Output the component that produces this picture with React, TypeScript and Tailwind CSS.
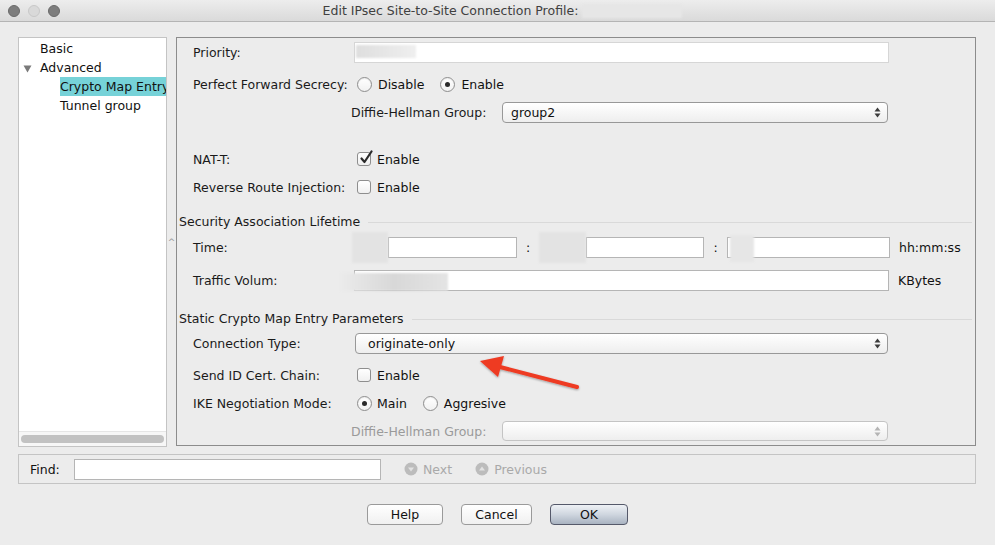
import React from "react";

const font = { fontFamily: '"DejaVu Sans", "Lucida Grande", sans-serif' };

function Radio({ checked }: { checked?: boolean }) {
  return (
    <span className="inline-flex h-[15px] w-[15px] shrink-0 items-center justify-center rounded-full border border-[#8e8e8e] bg-gradient-to-b from-[#ffffff] to-[#f1f1f1] shadow-[inset_0_1px_1px_rgba(0,0,0,0.08)]">
      {checked && <span className="h-[5px] w-[5px] rounded-full bg-[#2a2a2a]" />}
    </span>
  );
}

function Check({ checked }: { checked?: boolean }) {
  return (
    <span className="relative inline-flex h-[14px] w-[14px] shrink-0 items-center justify-center rounded-[3px] border border-[#8e8e8e] bg-gradient-to-b from-[#ffffff] to-[#f0f0f0]">
      {checked && (
        <svg width="14" height="15" viewBox="0 0 14 15" className="absolute left-[1px] top-[-3px]">
          <path d="M2.5 8.5 L5.5 12 L12.5 1.5" fill="none" stroke="#2b2b2b" strokeWidth="2.2" strokeLinecap="round" strokeLinejoin="round" />
        </svg>
      )}
    </span>
  );
}

function Arrows({ light }: { light?: boolean }) {
  const c = light ? "#b4b4b4" : "#3c3c3c";
  return (
    <svg width="7" height="11" viewBox="0 0 7 11">
      <path d="M3.5 0.5 L6.5 4.5 L0.5 4.5 Z" fill={c} />
      <path d="M3.5 10.5 L6.5 6.5 L0.5 6.5 Z" fill={c} />
    </svg>
  );
}

function Txt({ children, className = "" }: { children: React.ReactNode; className?: string }) {
  return <span className={`pt-[2px] text-[12.5px] text-[#111] ${className}`}>{children}</span>;
}

function Select({ value, w, disabled }: { value?: string; w: string; disabled?: boolean }) {
  return (
    <div
      className={`flex h-full items-center justify-between rounded-[4px] border bg-gradient-to-b from-[#ffffff] to-[#eeeeee] pl-[8px] pr-[6px] ${w} ${
        disabled ? "border-[#c4c4c4]" : "border-[#989898]"
      }`}
    >
      <Txt>{value}</Txt>
      <Arrows light={disabled} />
    </div>
  );
}

function SectionTitle({ text, mt }: { text: string; mt: string }) {
  return (
    <div className={`flex h-[16px] items-center pl-[2px] pr-[3px] ${mt}`}>
      <span className="pt-[2px] text-[12.5px] leading-none text-[#1a1a1a]">{text}</span>
      <div className="ml-[8px] mt-[2px] h-px flex-1 bg-[#d9d9d9]" />
    </div>
  );
}

function Label({ text, w = "w-[161px]", gray }: { text: string; w?: string; gray?: boolean }) {
  return <span className={`shrink-0 pt-[2px] text-[12.5px] ${gray ? "text-[#9a9a9a]" : "text-[#1a1a1a]"} ${w}`}>{text}</span>;
}

function Button({ text, def, w }: { text: string; def?: boolean; w: string }) {
  return (
    <div
      className={`flex h-[21px] items-center justify-center rounded-[4px] border pt-[1px] text-[12.5px] text-[#111] ${w} ${
        def
          ? "border-[#55596a] bg-gradient-to-b from-[#eef1f5] via-[#cfd6df] to-[#a9b3c1]"
          : "border-[#9a9a9a] bg-gradient-to-b from-[#ffffff] to-[#f0f0f0]"
      }`}
    >
      {text}
    </div>
  );
}

export default function App() {
  return (
    <div className="relative flex h-[545px] w-[995px] flex-col overflow-hidden bg-[#ececec]" style={font}>
      {/* title bar */}
      <div className="relative flex h-[22px] shrink-0 items-center border-b border-[#b4b4b4] bg-gradient-to-b from-[#ededed] to-[#dadada]">
        <div className="flex items-center gap-[8px] pl-[8px]">
          <span className="h-[12px] w-[12px] rounded-full border border-[#6a6a6a] bg-[#7d7d7d]" />
          <span className="h-[12px] w-[12px] rounded-full border border-[#c8c8c8] bg-[#d9d9d9]" />
          <span className="h-[12px] w-[12px] rounded-full border border-[#6a6a6a] bg-[#7d7d7d]" />
        </div>
        <div className="flex flex-1 items-center justify-center pr-[50px]">
          <span className="pt-[1px] text-[12.5px] text-[#404040]">Edit IPsec Site-to-Site Connection Profile:</span>
          <span className="ml-[4px] h-[14px] w-[100px] bg-[#e6e6e6] blur-[1px]" />
        </div>
      </div>

      {/* main */}
      <div className="flex shrink-0 pl-[18px] pt-[15px]">
        {/* tree */}
        <div className="flex h-[410px] w-[149px] shrink-0 flex-col border border-[#c4c4c4] bg-white">
          <div className="flex flex-1 flex-col pt-[1px] text-[12.5px] text-[#111]">
            <div className="flex h-[19px] items-center pl-[21px] pt-[2px]">Basic</div>
            <div className="flex h-[19px] items-center pl-[4px] pt-[2px]">
              <svg width="9" height="8" viewBox="0 0 9 8" className="mr-[8px]">
                <path d="M0.5 0.5 L8.5 0.5 L4.5 7.5 Z" fill="#7a7a7a" />
              </svg>
              Advanced
            </div>
            <div className="flex h-[19px] items-center pl-[41px]">
              <span className="flex h-[19px] min-w-0 flex-1 items-center overflow-hidden whitespace-nowrap bg-[#76d2d8] pt-[2px]">Crypto Map Entry</span>
            </div>
            <div className="flex h-[19px] items-center pl-[41px] pt-[2px]">Tunnel group</div>
          </div>
          <div className="flex h-[15px] items-center border-t border-[#e6e6e6] bg-[#f7f7f7] px-[2px]">
            <div className="h-[8px] flex-1 rounded-full bg-[#c2c2c2]" />
          </div>
        </div>

        {/* splitter */}
        <div className="flex w-[9px] shrink-0 items-center justify-center">
          <span className="text-[9px] leading-none text-[#999]">^</span>
        </div>

        {/* right panel */}
        <div className="flex h-[409px] w-[800px] shrink-0 flex-col border border-[#8c8c8c] bg-[#ececec]">
          {/* Priority */}
          <div className="mt-[4px] flex h-[21px] items-center pl-[16px]">
            <Label text="Priority:" />
            <div className="relative h-full w-[535px] border border-[#d6d6d6] bg-white">
              <div className="absolute left-[1px] top-[2px] h-[13px] w-[60px] bg-gradient-to-r from-[#dedede] to-[#efefef] blur-[1px]" />
            </div>
          </div>
          {/* PFS */}
          <div className="mt-[10px] flex h-[22px] items-center pl-[16px]">
            <Label text="Perfect Forward Secrecy:" />
            <div className="flex items-center pl-[3px]">
              <Radio />
              <Txt className="ml-[6px]">Disable</Txt>
              <span className="ml-[16px] flex"><Radio checked /></span>
              <Txt className="ml-[6px]">Enable</Txt>
            </div>
          </div>
          {/* DH */}
          <div className="mt-[7px] flex h-[21px] items-center pl-[174px]">
            <Label text="Diffie-Hellman Group:" w="w-[151px]" />
            <Select value="group2" w="w-[386px]" />
          </div>
          {/* NAT-T */}
          <div className="mt-[25px] flex h-[22px] items-center pl-[16px]">
            <Label text="NAT-T:" w="w-[164px]" />
            <Check checked />
            <Txt className="ml-[6px]">Enable</Txt>
          </div>
          {/* RRI */}
          <div className="mt-[6px] flex h-[22px] items-center pl-[16px]">
            <Label text="Reverse Route Injection:" w="w-[164px]" />
            <Check />
            <Txt className="ml-[6px]">Enable</Txt>
          </div>

          <SectionTitle text="Security Association Lifetime" mt="mt-[15px]" />

          {/* Time */}
          <div className="mt-[8px] flex h-[21px] items-center pl-[16px]">
            <Label text="Time:" w="w-[159px]" />
            <div className="h-[31px] w-[36px] shrink-0 bg-[#e3e3e3] blur-[1px]" />
            <div className="h-full w-[129px] shrink-0 border border-[#b5b5b5] bg-white" />
            <Txt className="w-[22px] text-center">:</Txt>
            <div className="h-[31px] w-[47px] shrink-0 bg-[#e3e3e3] blur-[1px]" />
            <div className="h-full w-[118px] shrink-0 border border-[#b5b5b5] bg-white" />
            <Txt className="w-[23px] text-center">:</Txt>
            <div className="relative h-full w-[163px] shrink-0 border border-[#b5b5b5] bg-white">
              <div className="absolute left-[2px] top-[-3px] h-[27px] w-[24px] bg-[#e6e6e6] blur-[1px]" />
            </div>
            <Txt className="ml-[9px]">hh:mm:ss</Txt>
          </div>
          {/* Traffic */}
          <div className="mt-[12px] flex h-[21px] items-center pl-[16px]">
            <Label text="Traffic Volum:" />
            <div className="relative h-full w-[535px] shrink-0 border border-[#b5b5b5] bg-white">
              <div className="absolute left-[-15px] top-[2px] h-[18px] w-[108px] bg-gradient-to-r from-[#ebebeb] via-[#d8d8d8] to-[#e4e4e4] blur-[1px]" />
            </div>
            <Txt className="ml-[9px]">KBytes</Txt>
          </div>

          <SectionTitle text="Static Crypto Map Entry Parameters" mt="mt-[19px]" />

          {/* Connection Type */}
          <div className="mt-[7px] flex h-[21px] items-center pl-[16px]">
            <Label text="Connection Type:" w="w-[162px]" />
            <Select value="originate-only" w="w-[533px] pl-[12px]" />
          </div>
          {/* Send ID */}
          <div className="mt-[10px] flex h-[22px] items-center pl-[16px]">
            <Label text="Send ID Cert. Chain:" w="w-[164px]" />
            <Check />
            <Txt className="ml-[6px]">Enable</Txt>
          </div>
          {/* IKE */}
          <div className="mt-[6px] flex h-[22px] items-center pl-[16px]">
            <Label text="IKE Negotiation Mode:" w="w-[164px]" />
            <Radio checked />
            <Txt className="ml-[5px]">Main</Txt>
            <span className="ml-[16px] flex"><Radio /></span>
            <Txt className="ml-[6px]">Aggresive</Txt>
          </div>
          {/* DH disabled */}
          <div className="mt-[7px] flex h-[20px] items-center pl-[174px]">
            <Label text="Diffie-Hellman Group:" w="w-[151px]" gray />
            <Select w="w-[386px]" disabled />
          </div>
        </div>
      </div>

      {/* find bar */}
      <div className="ml-[18px] mt-[7px] flex h-[30px] w-[958px] shrink-0 items-center border border-[#c4c4c4] bg-[#ececec] pl-[11px]">
        <Txt className="w-[44px]">Find:</Txt>
        <div className="h-[21px] w-[307px] border border-[#b5b5b5] bg-white" />
        <span className="ml-[23px] flex items-center">
          <svg width="14" height="14" viewBox="0 0 14 14">
            <circle cx="7" cy="7" r="6.5" fill="#bcbcbc" />
            <path d="M4 5.5 L10 5.5 L7 9.5 Z" fill="#e2e2e2" />
          </svg>
          <Txt className="ml-[5px] !text-[#a9a9a9]">Next</Txt>
        </span>
        <span className="ml-[23px] flex items-center">
          <svg width="14" height="14" viewBox="0 0 14 14">
            <circle cx="7" cy="7" r="6.5" fill="#bcbcbc" />
            <path d="M4 8.5 L10 8.5 L7 4.5 Z" fill="#e2e2e2" />
          </svg>
          <Txt className="ml-[5px] !text-[#a9a9a9]">Previous</Txt>
        </span>
      </div>

      {/* buttons */}
      <div className="mt-[20px] flex shrink-0 justify-center gap-[18px]">
        <Button text="Help" w="w-[76px]" />
        <Button text="Cancel" w="w-[71px]" />
        <Button text="OK" def w="w-[78px]" />
      </div>

      {/* red annotation arrow */}
      <svg className="absolute left-[470px] top-[348px]" width="120" height="50" viewBox="0 0 120 50">
        <defs>
          <filter id="sh" x="-20%" y="-50%" width="140%" height="200%">
            <feDropShadow dx="0" dy="1" stdDeviation="1.2" floodColor="#000" floodOpacity="0.35" />
          </filter>
        </defs>
        <g filter="url(#sh)">
          <path d="M107 39 L30 19" stroke="#ee3a24" strokeWidth="4" strokeLinecap="round" />
          <path d="M10 13 L34 8 L28 29 Z" fill="#ee3a24" />
        </g>
      </svg>
    </div>
  );
}
